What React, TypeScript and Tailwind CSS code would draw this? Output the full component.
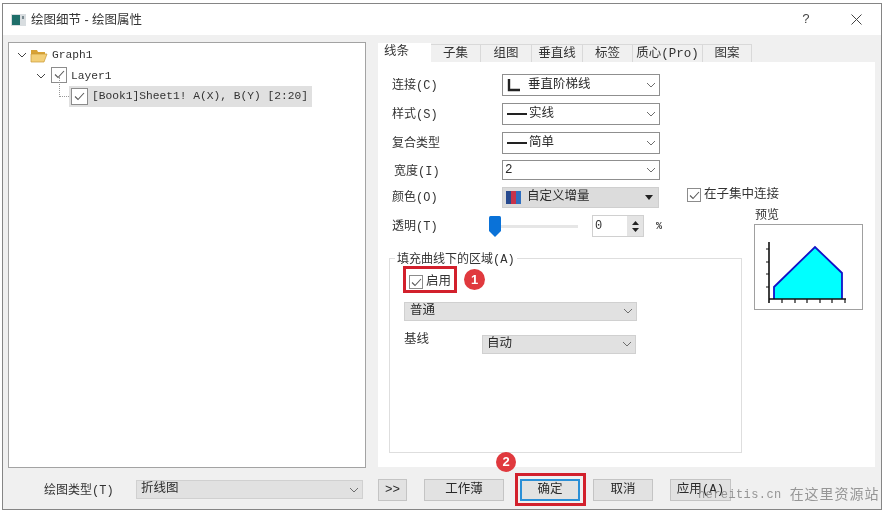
import React from "react";

const cjk = "font-['Liberation_Mono','Noto_Sans_CJK_SC',monospace]";

function Chevron({ className = "" }: { className?: string }) {
  return (
    <svg width="10" height="6" viewBox="0 0 10 6" className={className}>
      <path d="M1 1l4 4 4-4" fill="none" stroke="currentColor" strokeWidth="1" />
    </svg>
  );
}

function Check({ size = 15, border = "border-[#8c8c8c]" }: { size?: number; border?: string }) {
  return (
    <span
      className={`inline-flex shrink-0 items-center justify-center border bg-white ${border}`}
      style={{ width: size, height: size }}
    >
      <svg width="11" height="9" viewBox="0 0 11 9">
        <path d="M1 4.5l3 3 6-6.5" fill="none" stroke="#5a5a5a" strokeWidth="1.1" />
      </svg>
    </span>
  );
}

function Select({
  children,
  filled = false,
  className = "",
}: {
  children: React.ReactNode;
  filled?: boolean;
  className?: string;
}) {
  return (
    <div
      className={`flex items-center justify-between pl-[4px] pr-[3px] border text-[12.5px] text-[#2a2a2a] ${
        filled ? "bg-[#e1e1e1] border-[#d0d0d0]" : "bg-white border-[#8f8f8f]"
      } ${className}`}
    >
      <div className="flex items-center gap-[2px] whitespace-nowrap">{children}</div>
      <Chevron className="text-[#6e6e6e]" />
    </div>
  );
}

function FormRow({
  label,
  h,
  mt,
  labelClass = "pl-[3px] pt-[1px]",
  children,
}: {
  label: string;
  h: string;
  mt: string;
  labelClass?: string;
  children: React.ReactNode;
}) {
  return (
    <div className={`flex items-center ${h} ${mt}`}>
      <div className={`w-[113px] shrink-0 text-[12px] text-[#333] ${labelClass}`}>{label}</div>
      {children}
    </div>
  );
}

function LineSample() {
  return <span className="inline-block w-[20px] h-[2px] bg-[#222]" />;
}

function Btn({ children, className = "" }: { children: React.ReactNode; className?: string }) {
  return (
    <div
      className={`flex items-center justify-center h-[22px] pt-[1px] bg-[#e2e2e2] border border-[#c4c4c4] text-[12.5px] text-[#2a2a2a] ${className}`}
    >
      {children}
    </div>
  );
}

const tabs = [
  { label: "子集", w: "w-[50px]" },
  { label: "组图", w: "w-[51px]" },
  { label: "垂直线", w: "w-[51px]" },
  { label: "标签", w: "w-[50px]" },
  { label: "质心(Pro)", w: "w-[70px]" },
  { label: "图案", w: "w-[49px]" },
];

function Preview() {
  const ticks = [27, 40, 52, 65, 77, 90];
  return (
    <svg width="108" height="85" viewBox="0 0 108 85" className="block">
      <polygon points="19,74 19,62 60,22 87,48 87,74" fill="#00ffff" />
      <polyline points="19,74 19,62 60,22 87,48 87,74" fill="none" stroke="#1212c8" strokeWidth="1.8" />
      <path d="M14 17V78M14 74H91" stroke="#111" strokeWidth="1.6" fill="none" />
      {ticks.map((x) => (
        <path key={x} d={`M${x} 74v4`} stroke="#111" strokeWidth="1.2" />
      ))}
      {[24, 37, 49, 62].map((y) => (
        <path key={y} d={`M11 ${y}h3`} stroke="#111" strokeWidth="1" />
      ))}
    </svg>
  );
}

export default function App() {
  return (
    <div className={`relative w-[886px] h-[513px] overflow-hidden bg-white blur-[0.35px] ${cjk}`}>
      <div className="ml-[2px] mt-[3px] w-[880px] h-[507px] border border-[#858585] flex flex-col">
        {/* title bar */}
        <div className="h-[31px] shrink-0 bg-white flex items-center pl-[8px] pr-[19px]">
          <svg width="15" height="12" viewBox="0 0 15 12" className="shrink-0">
            <rect width="15" height="12" fill="#d8dde0" />
            <rect x="1" y="1" width="8" height="10" fill="#1f6f6a" />
            <rect x="11" y="2" width="2" height="3" fill="#7a8a90" />
          </svg>
          <span className="ml-[5px] pt-[2px] text-[12.5px] text-[#333] font-['Liberation_Sans','Noto_Sans_CJK_SC',sans-serif]">
            绘图细节 - 绘图属性
          </span>
          <span className="ml-auto mr-[41px] text-[13px] text-[#444]">?</span>
          <svg width="11" height="11" viewBox="0 0 11 11">
            <path d="M.5.5l10 10M10.5.5l-10 10" stroke="#444" strokeWidth="1" />
          </svg>
        </div>

        {/* body */}
        <div className="flex-1 bg-[#f0f0f0] pl-[5px] pt-[7px]">
          <div className="flex h-[426px]">
            {/* tree */}
            <div className="w-[358px] border border-[#a3a3a3] bg-white text-[11.25px] text-[#333]">
              <div className="flex items-center h-[22px] pl-[8px] mt-[1px]">
                <Chevron className="text-[#444]" />
                <svg width="18" height="15" viewBox="0 0 18 15" className="ml-[3px]">
                  <path d="M1 2h6l1 2h7v3H1z" fill="#d8a235" />
                  <path d="M1 14V6h16l-3 8z" fill="#f3cf78" stroke="#c99a35" strokeWidth=".7" />
                </svg>
                <span className="ml-[4px]">Graph1</span>
              </div>
              <div className="flex items-center h-[20px] pl-[27px]">
                <Chevron className="text-[#444]" />
                <span className="ml-[5px]">
                  <Check size={16} />
                </span>
                <span className="ml-[4px]">Layer1</span>
              </div>
              <div className="relative flex items-center h-[21px] ml-[60px] w-[243px] pl-[2px] bg-[#e0e0e0]">
                <div className="absolute left-[-10px] top-[-9px] w-[10px] h-[20px] border-l border-b border-dotted border-[#999]" />
                <Check size={17} />
                <span className="ml-[4px] whitespace-nowrap">[Book1]Sheet1! A(X), B(Y) [2:20]</span>
              </div>
            </div>

            {/* tabs + panel */}
            <div className="ml-[12px] w-[497px] flex flex-col pt-[1px]">
              <div className="flex items-end h-[19px] shrink-0 text-[12.5px] text-[#333]">
                <div className="w-[53px] h-[19px] bg-white pl-[6px] flex items-center">线条</div>
                {tabs.map((t) => (
                  <div
                    key={t.label}
                    className={`${t.w} h-[18px] pt-[2px] border-r border-t border-[#d9d9d9] flex items-center justify-center whitespace-nowrap`}
                  >
                    {t.label}
                  </div>
                ))}
              </div>
              <div className="h-[405px] bg-white pl-[11px] pt-[12px] flex">
                <div className="w-[353px] shrink-0">
                  <FormRow label="连接(C)" h="h-[22px]" mt="mt-0">
                    <Select className="w-[158px] h-[22px]">
                      <svg width="14" height="13" viewBox="0 0 14 13" className="mr-[5px]">
                        <path d="M2 0v11h11" fill="none" stroke="#222" strokeWidth="2.4" />
                      </svg>
                      <span>垂直阶梯线</span>
                    </Select>
                  </FormRow>
                  <FormRow label="样式(S)" h="h-[22px]" mt="mt-[7px]">
                    <Select className="w-[158px] h-[22px]">
                      <LineSample />
                      <span>实线</span>
                    </Select>
                  </FormRow>
                  <FormRow label="复合类型" h="h-[22px]" mt="mt-[7px]">
                    <Select className="w-[158px] h-[22px]">
                      <LineSample />
                      <span>简单</span>
                    </Select>
                  </FormRow>
                  <FormRow label="宽度(I)" h="h-[20px]" mt="mt-[6px]" labelClass="pl-[5px] pt-[4px]">
                    <Select className="w-[158px] h-[20px]">
                      <span className="-ml-[2px]">2</span>
                    </Select>
                  </FormRow>
                  <FormRow label="颜色(O)" h="h-[21px]" mt="mt-[7px]">
                    <div className="w-[157px] h-[21px] shrink-0 bg-[#dcdcdc] border border-[#cfcfcf] flex items-center justify-between pl-[3px] pr-[5px] text-[12.5px] text-[#2a2a2a]">
                      <div className="flex items-center gap-[6px]">
                        <svg width="15" height="13" viewBox="0 0 15 13">
                          <rect width="5" height="13" fill="#274a8f" />
                          <rect x="5" width="5" height="13" fill="#c8334a" />
                          <rect x="10" width="5" height="13" fill="#2f6fc0" />
                        </svg>
                        <span>自定义增量</span>
                      </div>
                      <svg width="8" height="5" viewBox="0 0 8 5">
                        <path d="M0 0h8L4 5z" fill="#222" />
                      </svg>
                    </div>
                    <div className="ml-[28px] -mt-[5px] flex items-center gap-[3px] text-[12.5px] text-[#333] whitespace-nowrap">
                      <Check size={14} />
                      在子集中连接
                    </div>
                  </FormRow>
                  <div className="flex items-center h-[22px] mt-[7px]">
                    <div className="w-[100px] shrink-0 pl-[3px] pt-[1px] text-[12px] text-[#333]">透明(T)</div>
                    <div className="relative w-[89px] h-[3px] bg-[#e6e6e6]">
                      <svg width="12" height="21" viewBox="0 0 12 21" className="absolute left-0 top-[-9px]">
                        <path d="M0 1.5Q0 0 1.5 0h9Q12 0 12 1.5V15l-6 6-6-6z" fill="#0a72d8" />
                      </svg>
                    </div>
                    <div className="ml-[14px] flex w-[52px] h-[22px] border border-[#d0d0d0] bg-[#e4e4e4]">
                      <div className="w-[34px] bg-white pl-[2px] text-[12px] leading-[20px] text-[#333]">0</div>
                      <div className="flex-1 flex flex-col items-center justify-center gap-[3px] px-[1px]">
                        <svg width="7" height="4" viewBox="0 0 7 4">
                          <path d="M3.5 0L7 4H0z" fill="#222" />
                        </svg>
                        <svg width="7" height="4" viewBox="0 0 7 4">
                          <path d="M0 0h7L3.5 4z" fill="#222" />
                        </svg>
                      </div>
                    </div>
                    <span className="ml-[12px] text-[10px] font-bold text-[#333]">%</span>
                  </div>

                  {/* area fill group */}
                  <div className="relative mt-[21px] h-[195px] border border-[#dedede] pl-[14px] pt-[14px]">
                    <div className="absolute left-[5px] top-[-7px] bg-white px-[2px] text-[12px] leading-[16px] text-[#333] whitespace-nowrap">
                      填充曲线下的区域(A)
                    </div>
                    <div className="flex items-center gap-[3px] ml-[5px] text-[12.5px] text-[#333]">
                      <Check size={14} />
                      启用
                    </div>
                    <Select filled className="w-[233px] h-[19px] mt-[10px] pl-[5px]">
                      <span>普通</span>
                    </Select>
                    <div className="flex items-center mt-[14px] text-[12.5px] text-[#333]">
                      <span className="w-[78px] -mt-[8px]">基线</span>
                      <Select filled className="w-[154px] h-[19px]">
                        <span>自动</span>
                      </Select>
                    </div>
                  </div>
                </div>

                <div className="ml-[12px] pt-[133px]">
                  <div className="pl-[1px] h-[17px] text-[12px] leading-[18px] text-[#333]">预览</div>
                  <div className="w-[109px] h-[86px] border border-[#a0a0a0] bg-white">
                    <Preview />
                  </div>
                </div>
              </div>
            </div>
          </div>

          {/* bottom bar */}
          <div className="flex items-center mt-[10px] h-[23px]">
            <div className="w-[128px] pl-[36px] pt-[2px] text-[12px] text-[#333] whitespace-nowrap">绘图类型(T)</div>
            <Select filled className="w-[227px] h-[19px] border-[#c4c4c4]">
              <span>折线图</span>
            </Select>
            <Btn className="ml-[15px] w-[29px]">&gt;&gt;</Btn>
            <Btn className="ml-[17px] w-[80px]">工作薄</Btn>
            <Btn className="ml-[16px] w-[60px] !border-2 !border-[#2b8fd6]">确定</Btn>
            <Btn className="ml-[13px] w-[60px]">取消</Btn>
            <Btn className="ml-[17px] w-[61px]">应用(A)</Btn>
          </div>
        </div>
      </div>

      {/* annotations over the screenshot */}
      <div className="absolute left-[403px] top-[266px] w-[54px] h-[27px] border-[3px] border-[#d2202c]" />
      <div className="absolute left-[464px] top-[269px] w-[21px] h-[21px] rounded-full bg-[#e0393e] flex items-center justify-center text-[13px] font-bold text-white font-['Liberation_Sans',sans-serif]">
        1
      </div>
      <div className="absolute left-[515px] top-[473px] w-[71px] h-[33px] border-[3px] border-[#d2202c]" />
      <div className="absolute left-[496px] top-[452px] w-[20px] h-[20px] rounded-full bg-[#e0393e] flex items-center justify-center text-[13px] font-bold text-white font-['Liberation_Sans',sans-serif]">
        2
      </div>
      <div className="absolute left-[698px] top-[486px] flex items-center leading-[18px] text-[#8c8c8c]/90 whitespace-nowrap">
        <span className="text-[12px] tracking-[0.4px]">hereitis.cn</span>
        <span className="ml-[8px] text-[14px] tracking-[1px]">在这里资源站</span>
      </div>
    </div>
  );
}
